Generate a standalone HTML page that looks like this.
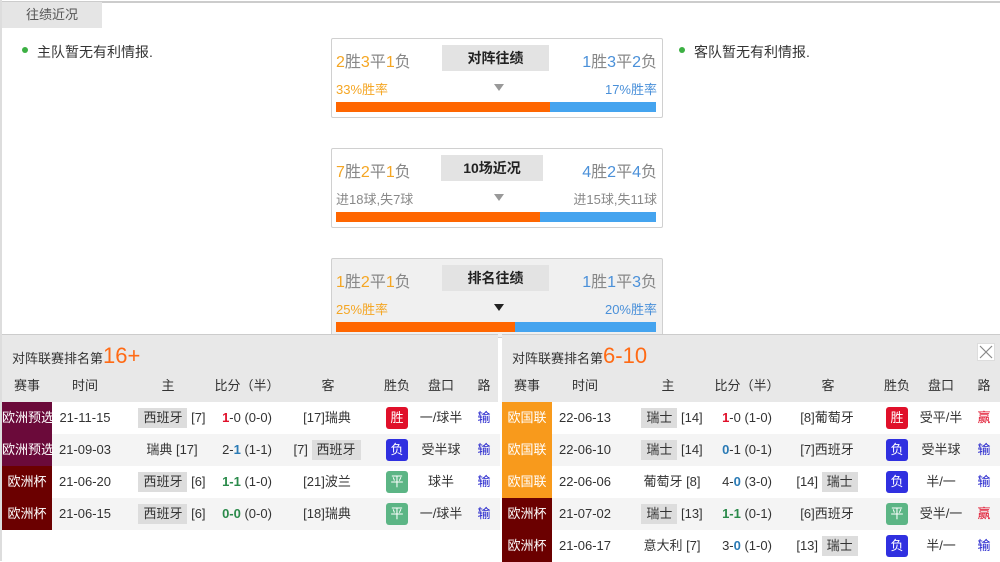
<!DOCTYPE html>
<html><head><meta charset="utf-8"><style>
*{margin:0;padding:0;box-sizing:border-box}
body{width:1000px;height:561px;position:relative;overflow:hidden;background:#fff;font-family:"Liberation Sans","Noto Sans CJK SC",sans-serif;font-size:13px;color:#333}
.a{position:absolute}
.box{position:absolute;left:331px;width:332px;height:80px;border:1px solid #d0d0d0;border-radius:2px;background:#fff}
.box .l1{position:absolute;left:4px;top:9px;font-size:16px;color:#888}
.box .r1{position:absolute;right:5px;top:9px;font-size:16px;color:#888}
.o{color:#f5a623}.b{color:#4a90d9}
.box .mid{position:absolute;left:110px;top:6px;width:107px;height:26px;background:#e3e3e3;text-align:center;line-height:26px;font-weight:bold;font-size:14px;color:#222}
.box .l2{position:absolute;left:4px;top:40px;font-size:13px}
.box .r2{position:absolute;right:5px;top:40px;font-size:13px}
.tri{position:absolute;left:162px;top:45px;width:0;height:0;border-left:5px solid transparent;border-right:5px solid transparent;border-top:7px solid #999}
.bar{position:absolute;left:4px;top:63px;width:320px;height:10px;background:#45a4ef}
.bar i{display:block;height:10px;background:#ff6600}
.pan{position:absolute;top:334px;background:#e8e8e8;border-top:1px solid #ccc}
.pan .t{position:absolute;left:10px;top:8px;font-size:13px;color:#333}
.pan .t span{font-size:22px;color:#ff6a14}
.hd{position:absolute;top:41px;height:26px;font-size:13px;color:#333}
.row{position:absolute;left:0;height:32px;width:498px;background:#fff}
.row.g{background:#f4f4f4}
.c{position:absolute;top:0;height:32px;line-height:32px;text-align:center;white-space:nowrap}
.lg{left:0;width:50px;color:#fff;font-size:13px}
.tg{background:#ddd;padding:0 5px;display:inline-block;line-height:20px}
.bd{display:inline-block;width:22px;height:22px;line-height:22px;border-radius:3px;color:#fff;font-size:13px;margin-top:5px}
.w{background:#e0102a}.ls{background:#3030e0}.d{background:#5cb585}
.red{color:#e0102a;font-weight:bold}.blu{color:#2a7ab5;font-weight:bold}.grn{color:#2a8a4a;font-weight:bold}
</style></head><body>
<div class="a" style="left:0;top:1px;width:1000px;height:2px;background:#ccc"></div>
<div class="a" style="left:0;top:0;width:2px;height:561px;background:#ddd"></div>
<div class="a" style="left:2px;top:2px;width:100px;height:26px;background:#e5e5e5;text-align:center;line-height:26px;color:#555">往绩近况</div>
<div class="a" style="left:22px;top:47px;width:6px;height:6px;border-radius:50%;background:#3cb043"></div>
<div class="a" style="left:37px;top:42px;font-size:14px">主队暂无有利情报.</div>
<div class="a" style="left:679px;top:47px;width:6px;height:6px;border-radius:50%;background:#3cb043"></div>
<div class="a" style="left:694px;top:42px;font-size:14px">客队暂无有利情报.</div>

<div class="box" style="top:38px"><div class="l1"><span class="o">2</span>胜<span class="o">3</span>平<span class="o">1</span>负</div><div class="mid">对阵往绩</div><div class="r1"><span class="b">1</span>胜<span class="b">3</span>平<span class="b">2</span>负</div><div class="l2 o">33%胜率</div><div class="tri"></div><div class="r2 b">17%胜率</div><div class="bar"><i style="width:214px"></i></div></div>
<div class="box" style="top:148px"><div class="l1"><span class="o">7</span>胜<span class="o">2</span>平<span class="o">1</span>负</div><div class="mid" style="left:109px;width:102px">10场近况</div><div class="r1"><span class="b">4</span>胜<span class="b">2</span>平<span class="b">4</span>负</div><div class="l2" style="color:#888">进18球,失7球</div><div class="tri"></div><div class="r2" style="color:#888">进15球,失11球</div><div class="bar"><i style="width:204px"></i></div></div>
<div class="box" style="top:258px;background:#f0f0f0"><div class="l1"><span class="o">1</span>胜<span class="o">2</span>平<span class="o">1</span>负</div><div class="mid">排名往绩</div><div class="r1"><span class="b">1</span>胜<span class="b">1</span>平<span class="b">3</span>负</div><div class="l2 o">25%胜率</div><div class="tri" style="border-top-color:#222"></div><div class="r2 b">20%胜率</div><div class="bar"><i style="width:179px"></i></div></div>

<div class="pan" style="left:2px;width:496px;height:196px">
<div class="t">对阵联赛排名第<span>16+</span></div>
<div class="hd" style="left:0;width:496px">
<div class="c" style="left:0;width:50px;height:26px;line-height:20px">赛事</div><div class="c" style="left:57px;width:52px;line-height:20px">时间</div><div class="c" style="left:136px;width:60px;line-height:20px">主</div><div class="c" style="left:205px;width:80px;line-height:20px">比分（半）</div><div class="c" style="left:306px;width:40px;line-height:20px">客</div><div class="c" style="left:380px;width:30px;line-height:20px">胜负</div><div class="c" style="left:424px;width:30px;line-height:20px">盘口</div><div class="c" style="left:474px;width:16px;line-height:20px">路</div></div>
<div class="row" style="top:67px"><div class="c lg" style="background:#6b0a3a">欧洲预选</div><div class="c" style="left:55px;width:56px">21-11-15</div><div class="c" style="left:120px;width:100px"><span class="tg">西班牙</span> [7]</div><div class="c" style="left:205px;width:80px"><span class="red">1</span>-0 (0-0)</div><div class="c" style="left:290px;width:70px">[17]瑞典</div><div class="c" style="left:380px;width:30px"><span class="bd w">胜</span></div><div class="c" style="left:414px;width:50px">一/球半</div><div class="c" style="left:472px;width:20px;color:#2222cc">输</div></div>
<div class="row g" style="top:99px"><div class="c lg" style="background:#6b0a3a">欧洲预选</div><div class="c" style="left:55px;width:56px">21-09-03</div><div class="c" style="left:120px;width:100px">瑞典 [17]</div><div class="c" style="left:205px;width:80px">2-<span class="blu">1</span> (1-1)</div><div class="c" style="left:280px;width:90px">[7] <span class="tg">西班牙</span></div><div class="c" style="left:380px;width:30px"><span class="bd ls">负</span></div><div class="c" style="left:414px;width:50px">受半球</div><div class="c" style="left:472px;width:20px;color:#2222cc">输</div></div>
<div class="row" style="top:131px"><div class="c lg" style="background:#6b0000">欧洲杯</div><div class="c" style="left:55px;width:56px">21-06-20</div><div class="c" style="left:120px;width:100px"><span class="tg">西班牙</span> [6]</div><div class="c" style="left:205px;width:80px"><span class="grn">1-1</span> (1-0)</div><div class="c" style="left:290px;width:70px">[21]波兰</div><div class="c" style="left:380px;width:30px"><span class="bd d">平</span></div><div class="c" style="left:414px;width:50px">球半</div><div class="c" style="left:472px;width:20px;color:#2222cc">输</div></div>
<div class="row g" style="top:163px"><div class="c lg" style="background:#6b0000">欧洲杯</div><div class="c" style="left:55px;width:56px">21-06-15</div><div class="c" style="left:120px;width:100px"><span class="tg">西班牙</span> [6]</div><div class="c" style="left:205px;width:80px"><span class="grn">0-0</span> (0-0)</div><div class="c" style="left:290px;width:70px">[18]瑞典</div><div class="c" style="left:380px;width:30px"><span class="bd d">平</span></div><div class="c" style="left:414px;width:50px">一/球半</div><div class="c" style="left:472px;width:20px;color:#2222cc">输</div></div>
</div>

<div class="pan" style="left:502px;width:498px;height:227px">
<div class="t">对阵联赛排名第<span>6-10</span></div>
<div class="a" style="left:475px;top:8px;width:18px;height:18px;background:#fff;border:1px solid #ddd"><svg width="16" height="16"><path d="M2 2L14 14M14 2L2 14" stroke="#888" stroke-width="1.2"/></svg></div>
<div class="hd" style="left:0;width:496px">
<div class="c" style="left:0;width:50px;line-height:20px">赛事</div><div class="c" style="left:57px;width:52px;line-height:20px">时间</div><div class="c" style="left:136px;width:60px;line-height:20px">主</div><div class="c" style="left:205px;width:80px;line-height:20px">比分（半）</div><div class="c" style="left:306px;width:40px;line-height:20px">客</div><div class="c" style="left:380px;width:30px;line-height:20px">胜负</div><div class="c" style="left:424px;width:30px;line-height:20px">盘口</div><div class="c" style="left:474px;width:16px;line-height:20px">路</div></div>
<div class="row" style="top:67px"><div class="c lg" style="background:#f89a1c">欧国联</div><div class="c" style="left:55px;width:56px">22-06-13</div><div class="c" style="left:120px;width:100px"><span class="tg">瑞士</span> [14]</div><div class="c" style="left:205px;width:80px"><span class="red">1</span>-0 (1-0)</div><div class="c" style="left:290px;width:70px">[8]葡萄牙</div><div class="c" style="left:380px;width:30px"><span class="bd w">胜</span></div><div class="c" style="left:414px;width:50px">受平/半</div><div class="c" style="left:472px;width:20px;color:#e0102a">赢</div></div>
<div class="row g" style="top:99px"><div class="c lg" style="background:#f89a1c">欧国联</div><div class="c" style="left:55px;width:56px">22-06-10</div><div class="c" style="left:120px;width:100px"><span class="tg">瑞士</span> [14]</div><div class="c" style="left:205px;width:80px"><span class="blu">0</span>-1 (0-1)</div><div class="c" style="left:290px;width:70px">[7]西班牙</div><div class="c" style="left:380px;width:30px"><span class="bd ls">负</span></div><div class="c" style="left:414px;width:50px">受半球</div><div class="c" style="left:472px;width:20px;color:#2222cc">输</div></div>
<div class="row" style="top:131px"><div class="c lg" style="background:#f89a1c">欧国联</div><div class="c" style="left:55px;width:56px">22-06-06</div><div class="c" style="left:120px;width:100px">葡萄牙 [8]</div><div class="c" style="left:205px;width:80px">4-<span class="blu">0</span> (3-0)</div><div class="c" style="left:280px;width:90px">[14] <span class="tg">瑞士</span></div><div class="c" style="left:380px;width:30px"><span class="bd ls">负</span></div><div class="c" style="left:414px;width:50px">半/一</div><div class="c" style="left:472px;width:20px;color:#2222cc">输</div></div>
<div class="row g" style="top:163px"><div class="c lg" style="background:#6b0000">欧洲杯</div><div class="c" style="left:55px;width:56px">21-07-02</div><div class="c" style="left:120px;width:100px"><span class="tg">瑞士</span> [13]</div><div class="c" style="left:205px;width:80px"><span class="grn">1-1</span> (0-1)</div><div class="c" style="left:290px;width:70px">[6]西班牙</div><div class="c" style="left:380px;width:30px"><span class="bd d">平</span></div><div class="c" style="left:414px;width:50px">受半/一</div><div class="c" style="left:472px;width:20px;color:#e0102a">赢</div></div>
<div class="row" style="top:195px"><div class="c lg" style="background:#6b0000">欧洲杯</div><div class="c" style="left:55px;width:56px">21-06-17</div><div class="c" style="left:120px;width:100px">意大利 [7]</div><div class="c" style="left:205px;width:80px">3-<span class="blu">0</span> (1-0)</div><div class="c" style="left:280px;width:90px">[13] <span class="tg">瑞士</span></div><div class="c" style="left:380px;width:30px"><span class="bd ls">负</span></div><div class="c" style="left:414px;width:50px">半/一</div><div class="c" style="left:472px;width:20px;color:#2222cc">输</div></div>
</div>
</body></html>
